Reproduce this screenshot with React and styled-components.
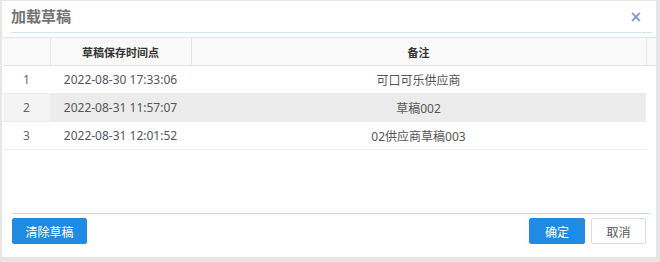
import React from 'react'
import styled, { createGlobalStyle } from 'styled-components'

const GlobalStyle = createGlobalStyle`
  html, body {
    margin: 0;
    padding: 0;
    background: #e6e6e6;
  }
  body {
    font-family: "Noto Sans", "Noto Sans CJK SC", sans-serif;
  }
`;

const Page = styled.div`
  width: 660px;
  height: 262px;
  padding: 1px 4px 5px 2px;
  box-sizing: border-box;
`;

const Dialog = styled.div`
  height: 100%;
  background: #fff;
  display: flex;
  flex-direction: column;
`;

const Head = styled.div`
  margin: 0 4px 0 9px;
  height: 31px;
  border-bottom: 1px solid #cfe5f6;
  display: flex;
  align-items: center;
  justify-content: space-between;
`;

const Title = styled.div`
  font-size: 15px;
  font-weight: 700;
  color: #737373;
  font-family: "Noto Sans CJK SC", sans-serif;
  margin-top: -2px;
`;

const Close = styled.span`
  color: #7d9ccc;
  font-size: 15px;
  font-weight: 700;
  margin-right: 10px;
  font-family: "DejaVu Sans", sans-serif;
  cursor: pointer;
`;

const TableWrap = styled.div`
  flex: 1;
  margin: 4px 0 0 1px;
`;

const Table = styled.table`
  width: 653px;
  border-collapse: collapse;
  table-layout: fixed;
  font-size: 12px;
  font-family: "Noto Sans", "Noto Sans CJK SC", sans-serif;
`;

const Th = styled.th`
  height: 27px;
  padding: 0;
  background: #f9f9f9;
  border-top: 1px solid #e3e3e3;
  border-bottom: 1px solid #e3e3e3;
  border-right: 1px solid #e3e3e3;
  color: #333;
  font-weight: 700;
  font-family: "Noto Sans CJK SC", sans-serif;
  font-size: 11px;
  &:last-child {
    border-right: none;
  }
`;

const Tr = styled.tr`
  background: ${props => props.stripe ? '#ececec' : '#fff'};
`;

const Td = styled.td`
  height: 27px;
  padding: 0;
  text-align: center;
  color: #555;
  border-bottom: 1px solid #ececec;
  white-space: nowrap;
`;

const NumTd = styled(Td)`
  background: ${props => props.stripe ? '#f4f4f4' : '#fff'};
  color: #666;
`;

const Gutter = styled.td`
  background: #fff;
  border: none;
`;

const Foot = styled.div`
  margin: 0 6px 0 10px;
  border-top: 1px solid #bfdff5;
  padding: 4px 4px 13px 0;
  display: flex;
  align-items: center;
`;

const Btn = styled.button`
  height: 26px;
  width: ${props => props.w}px;
  border-radius: 2px;
  font-size: 12px;
  font-family: "Noto Sans CJK SC", sans-serif;
  cursor: pointer;
  padding: 0;
  margin-left: ${props => props.gap || 0}px;
  border: 1px solid ${props => props.primary ? '#1f8be3' : '#dcdcdc'};
  background: ${props => props.primary ? '#1f8be3' : '#fff'};
  color: ${props => props.primary ? '#fff' : '#555'};
`;

const Spacer = styled.div`
  flex: 1;
`;

const rows = [
  { time: '2022-08-30 17:33:06', note: '可口可乐供应商' },
  { time: '2022-08-31 11:57:07', note: '草稿002' },
  { time: '2022-08-31 12:01:52', note: '02供应商草稿003' },
];

export default function App() {
  return (
    <Page>
      <GlobalStyle />
      <Dialog>
        <Head>
          <Title>加载草稿</Title>
          <Close>×</Close>
        </Head>
        <TableWrap>
          <Table>
            <colgroup>
              <col style={{ width: 47 }} />
              <col style={{ width: 141 }} />
              <col style={{ width: 455 }} />
              <col style={{ width: 10 }} />
            </colgroup>
            <thead>
              <tr>
                <Th></Th>
                <Th>草稿保存时间点</Th>
                <Th>备注</Th>
                <Th></Th>
              </tr>
            </thead>
            <tbody>
              {rows.map((r, i) => (
                <Tr key={i} stripe={i === 1}>
                  <NumTd stripe={i === 1}>{i + 1}</NumTd>
                  <Td>{r.time}</Td>
                  <Td>{r.note}</Td>
                  <Gutter />
                </Tr>
              ))}
            </tbody>
          </Table>
        </TableWrap>
        <Foot>
          <Btn primary w={75}>清除草稿</Btn>
          <Spacer />
          <Btn primary w={56}>确定</Btn>
          <Btn w={55} gap={6}>取消</Btn>
        </Foot>
      </Dialog>
    </Page>
  )
}
